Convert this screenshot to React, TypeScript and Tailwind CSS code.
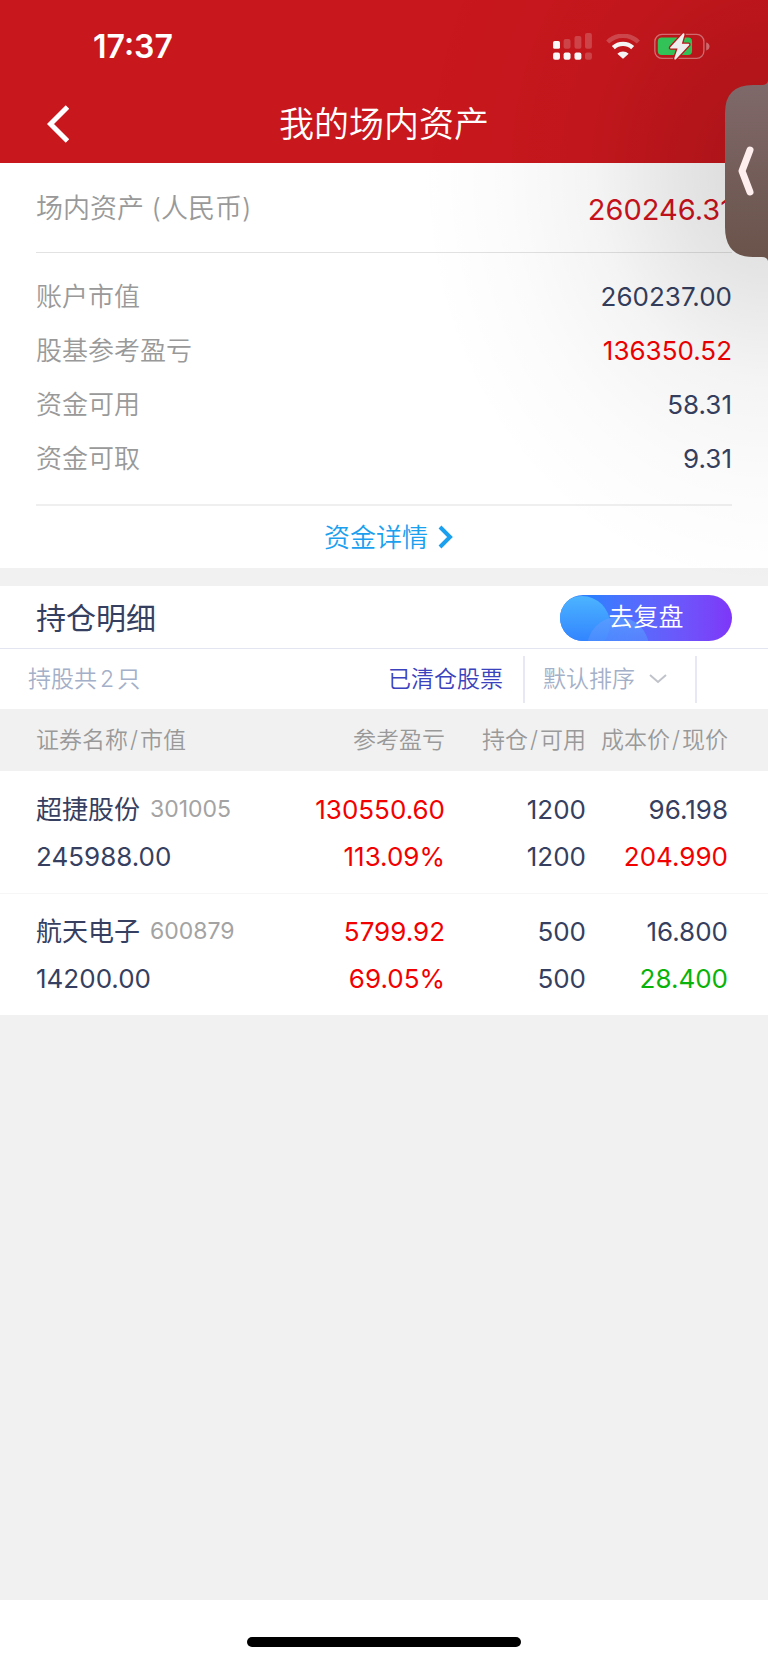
import React from 'react';

type Tone = 'dark' | 'red' | 'green';

const toneClass: Record<Tone, string> = {
  dark: 'text-[#363f5f]',
  red: 'text-[#f20000]',
  green: 'text-[#09b309]',
};

interface Holding {
  name: string;
  code: string;
  marketValue: string;
  profit: string;
  profitRate: string;
  amount: string;
  available: string;
  cost: string;
  price: string;
  priceTone: Tone;
}

const holdings: Holding[] = [
  {
    name: '超捷股份',
    code: '301005',
    marketValue: '245988.00',
    profit: '130550.60',
    profitRate: '113.09%',
    amount: '1200',
    available: '1200',
    cost: '96.198',
    price: '204.990',
    priceTone: 'red',
  },
  {
    name: '航天电子',
    code: '600879',
    marketValue: '14200.00',
    profit: '5799.92',
    profitRate: '69.05%',
    amount: '500',
    available: '500',
    cost: '16.800',
    price: '28.400',
    priceTone: 'green',
  },
];

const summary: { label: string; value: string; tone: Tone }[] = [
  { label: '账户市值', value: '260237.00', tone: 'dark' },
  { label: '股基参考盈亏', value: '136350.52', tone: 'red' },
  { label: '资金可用', value: '58.31', tone: 'dark' },
  { label: '资金可取', value: '9.31', tone: 'dark' },
];

const SignalIcon = () => (
  <svg viewBox="0 0 118 82" className="w-[39px] h-[27px]" fill="#fff" aria-hidden="true">
    <rect x="0" y="24" width="21" height="24" rx="5" />
    <rect x="32" y="18" width="21" height="30" rx="6" opacity=".2" />
    <rect x="65" y="9" width="21" height="39" rx="6" opacity=".2" />
    <rect x="97" y="0" width="21" height="48" rx="6" opacity=".2" />
    <rect x="0" y="59" width="21" height="22" rx="6" />
    <rect x="32" y="59" width="21" height="22" rx="6" />
    <rect x="65" y="59" width="21" height="22" rx="6" />
    <rect x="97" y="59" width="21" height="22" rx="6" opacity=".2" />
  </svg>
);

const WifiIcon = () => (
  <svg viewBox="0 0 102 75" className="w-[34px] h-[25px]" aria-hidden="true">
    <path d="M5 24a66 66 0 0 1 92 0" fill="none" stroke="#fff" strokeOpacity=".22" strokeWidth="13" />
    <path d="M22 41a42 42 0 0 1 58 0" fill="none" stroke="#fff" strokeWidth="13" />
    <path d="M34 59a25 25 0 0 1 34 0L53 73q-2 2-4 0z" fill="#fff" />
  </svg>
);

const BatteryIcon = () => (
  <svg viewBox="0 0 169 82" className="w-[56px] h-[27px]" aria-hidden="true">
    <rect x="2" y="4" width="149" height="73" rx="22" fill="none" stroke="#fff" strokeOpacity=".4" strokeWidth="4" />
    <path d="M158 29q10 3 10 12t-10 12z" fill="#fff" fillOpacity=".4" />
    <rect x="11" y="14" width="104" height="53" rx="12" fill="#35cf5d" />
    <path
      d="M88 1L49 43q-2 4 2 4h20L61 77q0 6 5 3l40-43q2-4-2-4H84L92 5q0-6-4-4z"
      fill="#fff"
      stroke="#c8171d"
      strokeWidth="8"
      paintOrder="stroke"
      strokeLinejoin="round"
    />
  </svg>
);

const Header: React.FC = () => (
  <header className="bg-[#c8171d] text-white pb-[7px]">
    <div className="h-[92px] flex items-center justify-between pl-[93px] pr-[58px]">
      <span className="pt-0.5 text-[32px] leading-10 font-semibold">17:37</span>
      <div className="flex items-center gap-[14px]">
        <SignalIcon />
        <WifiIcon />
        <BatteryIcon />
      </div>
    </div>
    <div className="h-16 grid grid-cols-[100px_1fr_100px] items-center">
      <button type="button" aria-label="返回" className="h-16 pl-[47px] flex items-center">
        <svg viewBox="0 0 22 38" className="w-[22px] h-[38px]" fill="none" aria-hidden="true">
          <path d="M20.500 2L3.500 19l17 17" stroke="#fff" strokeWidth="5" />
        </svg>
      </button>
      <h1 className="text-[35px] leading-[48px] font-[350] text-center">我的场内资产</h1>
    </div>
  </header>
);

const AssetSummary: React.FC = () => (
  <section className="bg-white px-9">
    <div className="h-[90px] pt-1 flex items-center justify-between border-b border-[#e2e2e2]">
      <span className="text-[27px] font-[350] text-[#999]">场内资产 (人民币)</span>
      <span className="text-[29px] text-[#d0121c]">260246.31</span>
    </div>
    <dl className="pt-4 pb-[19px] border-b-2 border-[#efefef]">
      {summary.map(item => (
        <div key={item.label} className="h-[54px] flex items-center justify-between text-[26px]">
          <dt className="font-[350] text-[#999]">{item.label}</dt>
          <dd className={toneClass[item.tone]}>{item.value}</dd>
        </div>
      ))}
    </dl>
    <a
      href="#funds"
      className="h-[62px] pl-2.5 flex items-center justify-center gap-2.5 text-[26px] font-[350] text-[#1aa0ee]"
    >
      资金详情
      <svg viewBox="0 0 16 24" className="w-4 h-6" fill="none" aria-hidden="true">
        <path d="M2 2l10 10L2 22" stroke="currentColor" strokeWidth="4" />
      </svg>
    </a>
  </section>
);

const FilterBar: React.FC = () => (
  <div className="h-[60px] flex items-center justify-between pl-7 pr-[71px] text-[23px] font-[350]">
    <span className="text-[#a4afc8]">
      持股共<span className="mx-[3px]">2</span>只
    </span>
    <div className="flex items-center">
      <button type="button" className="pr-5 text-[#3b42bd]">已清仓股票</button>
      <div className="relative w-[174px] h-[47px] border-x-2 border-[#e6e9f4]">
        <select
          aria-label="排序方式"
          className="appearance-none w-full h-full pl-[18px] bg-transparent text-[#a4afc8] outline-none"
        >
          <option>默认排序</option>
        </select>
        <svg
          viewBox="0 0 18 10"
          className="absolute right-[28px] top-[18px] w-[18px] h-[10px] pointer-events-none"
          fill="none"
          aria-hidden="true"
        >
          <path d="M1 1l8 7 8-7" stroke="#c0c3ca" strokeWidth="2" />
        </svg>
      </div>
    </div>
  </div>
);

const Slash = () => <span className="mx-0.5">/</span>;

const HoldingRow: React.FC<{ item: Holding }> = ({ item }) => (
  <tr className="h-[122px] border-b border-[#f6f6f6] last:border-b-0 text-right leading-[47px]">
    <td className="pl-9 pt-0.5 text-left">
      <div className="flex items-center gap-[10px]">
        {item.name}
        <span className="text-[23px] text-[#a3a3a3]">{item.code}</span>
      </div>
      <div>{item.marketValue}</div>
    </td>
    <td className="pt-0.5 text-[#f20000]">
      <div>{item.profit}</div>
      <div>{item.profitRate}</div>
    </td>
    <td className="pt-0.5">
      <div>{item.amount}</div>
      <div>{item.available}</div>
    </td>
    <td className="pr-10 pt-0.5">
      <div>{item.cost}</div>
      <div className={toneClass[item.priceTone]}>{item.price}</div>
    </td>
  </tr>
);

const Holdings: React.FC = () => (
  <section className="bg-white mt-[18px]">
    <div className="h-[63px] pt-0.5 flex items-center justify-between px-9 border-b border-[#e3e6f0]">
      <h2 className="text-[30px] leading-10 text-[#363f5f]">持仓明细</h2>
      <button
        type="button"
        className="relative overflow-hidden w-[172px] h-[46px] rounded-full bg-linear-to-r from-[#2f7dff] from-20% to-[#7e36f8] text-white text-[25px]"
      >
        <svg viewBox="0 0 172 46" className="absolute inset-0 w-full h-full" aria-hidden="true">
          <defs>
            <linearGradient id="bubble" x1="0" y1="0" x2="0" y2="1">
              <stop offset="0" stopColor="#4cb4ff" />
              <stop offset="1" stopColor="#2c79ff" />
            </linearGradient>
            <linearGradient id="wave" x1="0" y1="0" x2="0" y2="1">
              <stop offset="0" stopColor="#5d9cff" stopOpacity=".8" />
              <stop offset="1" stopColor="#4d7dff" stopOpacity=".3" />
            </linearGradient>
          </defs>
          <circle cx="22" cy="29" r="28" fill="url(#bubble)" />
          <circle cx="58" cy="53" r="31" fill="url(#wave)" />
        </svg>
        <span className="relative font-[350]">去复盘</span>
      </button>
    </div>
    <FilterBar />
    <table className="w-full table-fixed text-[26px] text-[#363f5f]">
      <thead>
        <tr className="h-[62px] bg-[#f1f1f1] text-[23px] text-[#999] text-right">
          <th className="pl-9 text-left font-[350]">证券名称<Slash />市值</th>
          <th className="w-[160px] font-[350]">参考盈亏</th>
          <th className="w-[141px] font-[350]">持仓<Slash />可用</th>
          <th className="w-[182px] pr-10 font-[350]">成本价<Slash />现价</th>
        </tr>
      </thead>
      <tbody>
        {holdings.map(item => (
          <HoldingRow key={item.code} item={item} />
        ))}
      </tbody>
    </table>
  </section>
);

// Side drawer handle that floats above the page together with its soft shadow
const DrawerHandle: React.FC = () => (
  <>
    <div className="absolute right-0 top-0 w-[360px] h-[600px] pointer-events-none bg-[radial-gradient(350px_420px_at_100%_170px,rgba(0,0,0,0.15),rgba(0,0,0,0.1)_25%,rgba(0,0,0,0.045)_50%,rgba(0,0,0,0.015)_75%,transparent)]" />
    <button type="button" aria-label="展开侧栏" className="absolute right-0 top-20 w-[43px] h-[181px]">
      <svg viewBox="0 0 43 181" className="w-full h-full" fill="none" aria-hidden="true">
        <defs>
          <linearGradient id="handle" x1="0" y1="0" x2="0" y2="1">
            <stop offset="0" stopColor="#80696a" />
            <stop offset="1" stopColor="#69534a" />
          </linearGradient>
        </defs>
        <path d="M43 1q-1 4-6 4h-9Q0 5 0 33v114q0 30 28 30h9q5 0 6 4z" fill="url(#handle)" />
        <path
          d="M25 70L17 91l8 21"
          stroke="#ffeeee"
          strokeWidth="7"
          strokeLinecap="round"
          strokeLinejoin="round"
        />
      </svg>
    </button>
  </>
);

export default function App() {
  return (
    <div
      lang="zh-CN"
      className="relative min-h-screen flex flex-col bg-[#f1f1f1] font-['Inter','Noto_Sans_CJK_SC',sans-serif]"
    >
      <Header />
      <main className="flex-1">
        <AssetSummary />
        <Holdings />
      </main>
      <footer className="h-[62px] bg-white flex justify-center pt-[37px]">
        <div className="w-[274px] h-[10px] rounded-full bg-black" />
      </footer>
      <DrawerHandle />
    </div>
  );
}
